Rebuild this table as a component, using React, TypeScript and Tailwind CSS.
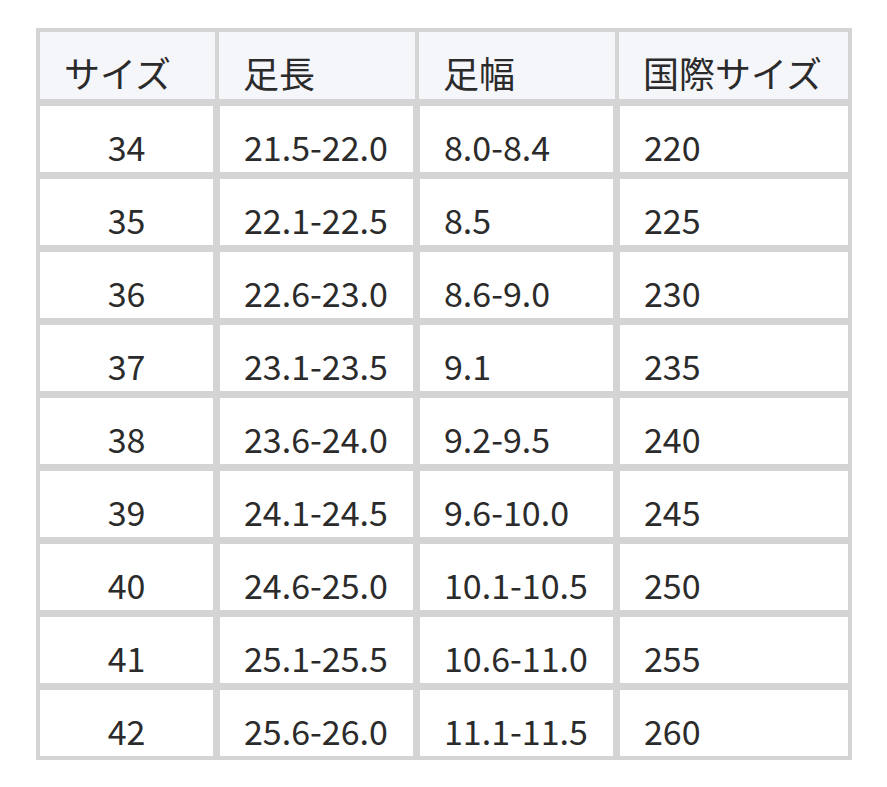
import React from "react";

const rows: string[][] = [
  ["34", "21.5-22.0", "8.0-8.4", "220"],
  ["35", "22.1-22.5", "8.5", "225"],
  ["36", "22.6-23.0", "8.6-9.0", "230"],
  ["37", "23.1-23.5", "9.1", "235"],
  ["38", "23.6-24.0", "9.2-9.5", "240"],
  ["39", "24.1-24.5", "9.6-10.0", "245"],
  ["40", "24.6-25.0", "10.1-10.5", "250"],
  ["41", "25.1-25.5", "10.6-11.0", "255"],
  ["42", "25.6-26.0", "11.1-11.5", "260"],
];

export default function App() {
  return (
    <div
      className="w-[887px] h-[787px] bg-white pt-[28px] pl-[36px] text-[#2b2b2b]"
      style={{ fontFamily: '"Noto Sans CJK JP", "Noto Sans", sans-serif' }}
    >
      <div className="w-[816px] border-[4px] border-[#d4d4d4] bg-[#d4d4d4] flex flex-col gap-[7px] text-[34px] leading-normal">
        <div className="flex gap-[4px] h-[67px] text-[36px]">
          <div className="w-[175px] bg-[#f5f6fa] flex items-end pl-[24px]">サイズ</div>
          <div className="w-[196px] bg-[#f5f6fa] flex items-end pl-[24px]">足長</div>
          <div className="w-[196px] bg-[#f5f6fa] flex items-end pl-[24px]">足幅</div>
          <div className="flex-1 bg-[#f5f6fa] flex items-end pl-[24px]">国際サイズ</div>
        </div>
        {rows.map((r) => (
          <div key={r[0]} className="flex gap-[7px] h-[66px]">
            <div className="w-[173px] bg-white flex items-end justify-center">{r[0]}</div>
            <div className="w-[193px] bg-white flex items-end pl-[24px]">{r[1]}</div>
            <div className="w-[193px] bg-white flex items-end pl-[24px]">{r[2]}</div>
            <div className="flex-1 bg-white flex items-end pl-[24px]">{r[3]}</div>
          </div>
        ))}
      </div>
    </div>
  );
}
